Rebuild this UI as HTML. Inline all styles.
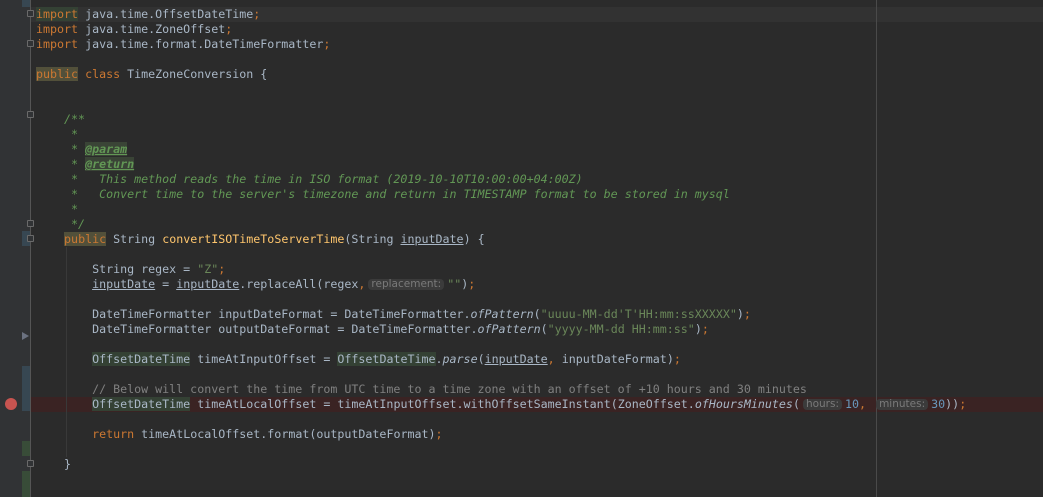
<!DOCTYPE html>
<html><head><meta charset="utf-8"><style>
body{margin:0;width:1043px;height:497px;background:#2b2b2b;overflow:hidden;position:relative;font-family:"DejaVu Sans Mono","Liberation Mono",monospace;font-size:11.65px;color:#a9b7c6}
.g{position:absolute;left:0;top:0;width:30px;height:497px;background:#313335}
.sep{position:absolute;left:30px;top:0;width:1px;height:497px;background:#555555}
.rm{position:absolute;left:876px;top:0;width:1px;height:497px;background:#4a4a4a}
.l{position:absolute;left:36px;height:15px;line-height:15px;white-space:pre}
.row{position:absolute;left:31px;right:0;height:15px}
.k{color:#cc7832}.s{color:#6a8759}.c{color:#808080}.d{color:#629755;font-style:italic}.m{color:#ffc66d}.n{color:#6897bb}.i{font-style:italic}
.tag{color:#629755;font-weight:bold;text-decoration:underline;font-style:italic;background:#3a4436}
.u{text-decoration:underline}
.hb{background:#52503a}.gb{background:#344134}
.h{display:inline-block;font-family:"DejaVu Sans","Liberation Sans",sans-serif;font-size:10.5px;color:#7a7a7a;background:#3b3b3b;border-radius:4px;line-height:11px;padding:0 3px;margin:0 3px 0 3px;vertical-align:1px}
.mk{position:absolute;left:22px;width:8px}
.ig{position:absolute;left:66px;width:1px;background:#393939}
.f{position:absolute;left:27px;width:7px;height:7px;border:1px solid #6a6a6a;box-sizing:border-box;background:#313335;border-radius:1px}
</style></head><body>
<div class="g"></div>
<div class="mk" style="top:0;height:7px;background:#374752"></div>
<div class="mk" style="top:231px;height:15px;background:#374752"></div>
<div class="mk" style="top:366px;height:45px;background:#374752"></div>
<div class="mk" style="top:441px;height:15px;background:#384c38"></div>
<div class="mk" style="top:471px;height:26px;background:#384c38"></div>
<div style="position:absolute;left:22px;top:332px;width:0;height:0;border-top:4px solid transparent;border-bottom:4px solid transparent;border-left:7px solid #6b7280"></div>
<div class="sep"></div>
<div class="row" style="top:7px;background:#323232"></div>
<div class="row" style="top:397px;background:#3a2323;left:31px"></div>
<div style="position:absolute;left:5px;top:398px;width:12px;height:12px;border-radius:50%;background:#c75450"></div>
<div class="rm"></div>
<div class="ig" style="top:247px;height:210px"></div>
<div class="f" style="top:10px"></div>
<div class="f" style="top:40px"></div>
<div class="f" style="top:111px"></div>
<div class="f" style="top:220px"></div>
<div class="f" style="top:235px"></div>
<div class="f" style="top:460px"></div>
<div class="l" style="top:7px"><span class="k gb">import</span> java.time.OffsetDateTime<span class="k">;</span></div>
<div class="l" style="top:22px"><span class="k">import</span> java.time.ZoneOffset<span class="k">;</span></div>
<div class="l" style="top:37px"><span class="k">import</span> java.time.format.DateTimeFormatter<span class="k">;</span></div>
<div class="l" style="top:67px"><span class="k hb">public</span> <span class="k">class</span> TimeZoneConversion {</div>
<div class="l d" style="top:112px">    /**</div>
<div class="l d" style="top:127px">     *</div>
<div class="l d" style="top:142px">     * <span class="tag">@param</span></div>
<div class="l d" style="top:157px">     * <span class="tag">@return</span></div>
<div class="l d" style="top:172px">     *   This method reads the time in ISO format (2019-10-10T10:00:00+04:00Z)</div>
<div class="l d" style="top:187px">     *   Convert time to the server's timezone and return in TIMESTAMP format to be stored in mysql</div>
<div class="l d" style="top:202px">     *</div>
<div class="l d" style="top:217px">     */</div>
<div class="l" style="top:232px">    <span class="k hb">public</span> String <span class="m">convertISOTimeToServerTime</span>(String <span class="u">inputDate</span>) {</div>
<div class="l" style="top:262px">        String regex = <span class="s">"Z"</span><span class="k">;</span></div>
<div class="l" style="top:277px">        <span class="u">inputDate</span> = <span class="u">inputDate</span>.replaceAll(regex<span class="k">,</span><span class="h">replacement:</span><span class="s">""</span>)<span class="k">;</span></div>
<div class="l" style="top:307px">        DateTimeFormatter inputDateFormat = DateTimeFormatter.<span class="i">ofPattern</span>(<span class="s">"uuuu-MM-dd'T'HH:mm:ssXXXXX"</span>)<span class="k">;</span></div>
<div class="l" style="top:322px">        DateTimeFormatter outputDateFormat = DateTimeFormatter.<span class="i">ofPattern</span>(<span class="s">"yyyy-MM-dd HH:mm:ss"</span>)<span class="k">;</span></div>
<div class="l" style="top:352px">        <span class="gb">OffsetDateTime</span> timeAtInputOffset = <span class="gb">OffsetDateTime</span>.<span class="i">parse</span>(<span class="u">inputDate</span><span class="k">,</span> inputDateFormat)<span class="k">;</span></div>
<div class="l c" style="top:382px">        // Below will convert the time from UTC time to a time zone with an offset of +10 hours and 30 minutes</div>
<div class="l" style="top:397px">        <span class="gb">OffsetDateTime</span> timeAtLocalOffset = timeAtInputOffset.withOffsetSameInstant(ZoneOffset.<span class="i">ofHoursMinutes</span>(<span class="h">hours:</span><span class="n">10</span><span class="k">,</span> <span class="h">minutes:</span><span class="n">30</span>))<span class="k">;</span></div>
<div class="l" style="top:427px">        <span class="k">return</span> timeAtLocalOffset.format(outputDateFormat)<span class="k">;</span></div>
<div class="l" style="top:457px">    }</div>
</body></html>
